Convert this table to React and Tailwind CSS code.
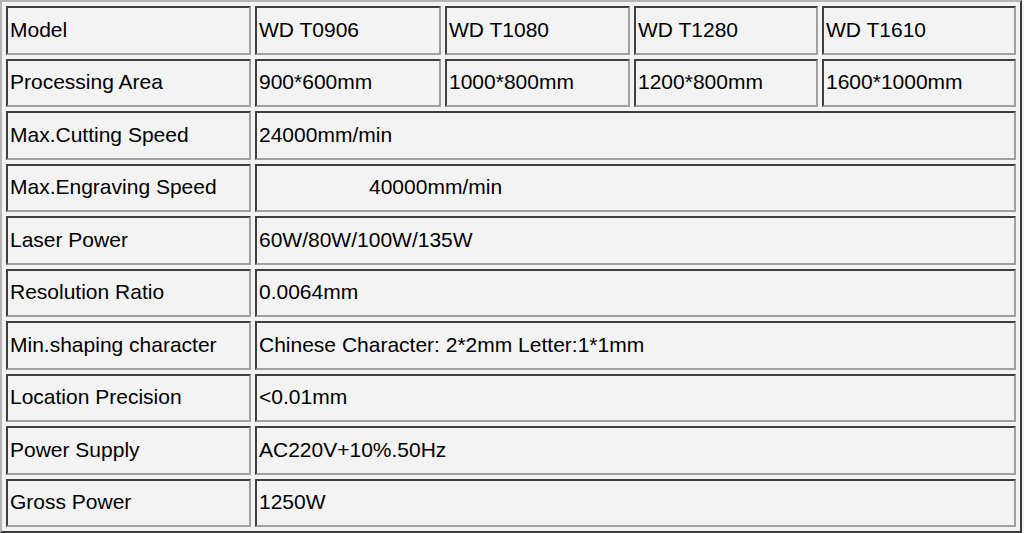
const rows = [
  ["Model", "WD T0906", "WD T1080", "WD T1280", "WD T1610"],
  ["Processing Area", "900*600mm", "1000*800mm", "1200*800mm", "1600*1000mm"],
  ["Max.Cutting Speed", "24000mm/min"],
  ["Max.Engraving Speed", "40000mm/min", true],
  ["Laser Power", "60W/80W/100W/135W"],
  ["Resolution Ratio", "0.0064mm"],
  ["Min.shaping character", "Chinese Character: 2*2mm Letter:1*1mm"],
  ["Location Precision", "<0.01mm"],
  ["Power Supply", "AC220V+10%.50Hz"],
  ["Gross Power", "1250W"],
]

const cell =
  "h-[48.5px] border-2 border-t-[#3f3f3f] border-l-[#3f3f3f] border-r-[#a0a0a0] border-b-[#a0a0a0] pl-[2px] pr-0 pt-0 pb-[2px] text-left align-middle whitespace-nowrap"

export default function App() {
  return (
    <div className="min-h-[533px] w-[1024px] bg-[#f3f3f3] font-['Liberation_Sans',Arial,sans-serif] text-[21px] leading-none text-black">
      <table className="w-[1022px] table-fixed border-separate border-spacing-[4px] border-2 border-t-[#b4b4b4] border-l-[#b4b4b4] border-r-[#3a3a3a] border-b-[#3a3a3a]">
        <colgroup>
          <col className="w-[245px]" />
          <col className="w-[186px]" />
          <col className="w-[185px]" />
          <col className="w-[184px]" />
          <col className="w-[194px]" />
        </colgroup>
        <tbody>
          {rows.map((r, i) => (
            <tr key={i}>
              <td className={cell}>{r[0]}</td>
              {r.length >= 5 ? (
                r.slice(1).map((v, j) => (
                  <td key={j} className={cell}>{v}</td>
                ))
              ) : (
                <td colSpan={4} className={cell}>
                  {r[2] ? <span className="ml-[110px]">{r[1]}</span> : r[1]}
                </td>
              )}
            </tr>
          ))}
        </tbody>
      </table>
    </div>
  )
}
